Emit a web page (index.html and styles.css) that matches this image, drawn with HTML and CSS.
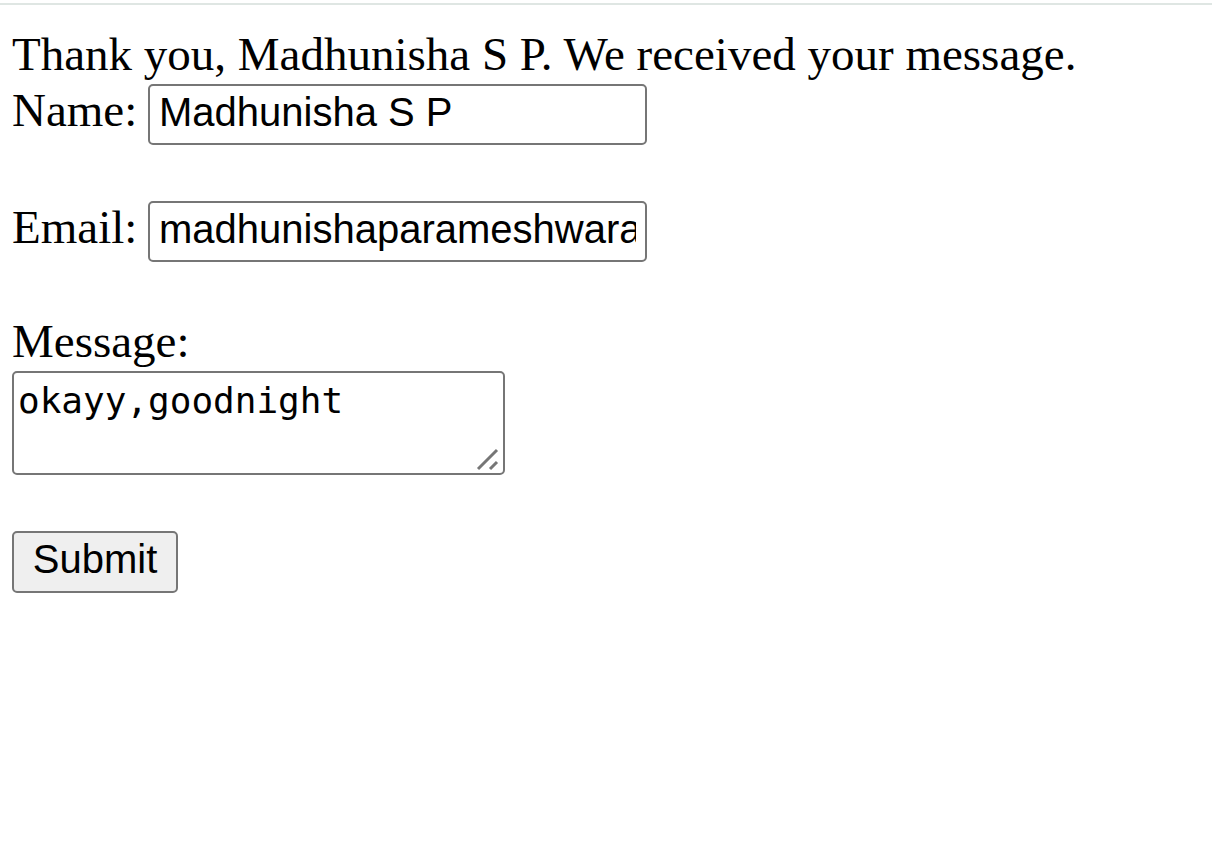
FILE: index.html
```html
<!DOCTYPE html>
<html lang="en">
<head>
<meta charset="utf-8">
<title>Contact</title>
<link rel="stylesheet" href="styles.css">
</head>
<body>
<div class="topline"></div>
<main class="page">
  <p class="thanks">Thank you, Madhunisha S P. We received your message.</p>
  <form class="form">
    <div class="row row-name">
      <label class="label" for="name">Name:</label>
      <input class="field" id="name" type="text" value="Madhunisha S P">
    </div>
    <div class="row row-email">
      <label class="label" for="email">Email:</label>
      <input class="field" id="email" type="text" value="madhunishaparameshwaran@gmail.com">
    </div>
    <div class="msg-label">
      <label class="label" for="message">Message:</label>
    </div>
    <div class="area-wrap">
      <textarea class="area" id="message">okayy,goodnight</textarea>
      <svg class="grip" width="24" height="24" viewBox="0 0 24 24" aria-hidden="true">
        <line x1="2" y1="22" x2="21" y2="3" stroke="#767676" stroke-width="3"/>
        <line x1="14" y1="22" x2="21" y2="15" stroke="#767676" stroke-width="3"/>
      </svg>
    </div>
    <div class="submit-row">
      <button class="btn" type="button">Submit</button>
    </div>
  </form>
</main>
</body>
</html>
```
FILE: styles.css
```css
html, body {
  margin: 0;
  padding: 0;
  background: #ffffff;
}

body {
  font-family: "Liberation Serif", "Times New Roman", serif;
  font-size: 47px;
  line-height: 55px;
  color: #000000;
}

.topline {
  margin-top: 3px;
  height: 2px;
  background: #dfe6e3;
}

.page {
  padding: 0 12px;
}

.thanks {
  margin: 22px 0 0 0;
  white-space: nowrap;
}

.form {
  margin: 0;
}

.row {
  display: flex;
  align-items: flex-start;
  gap: 10px;
}

.row .label {
  margin-top: -1px;
}

.row-name {
  margin-top: 2px;
}

.row-email {
  margin-top: 56px;
}

.label {
  display: block;
  width: 126px;
  white-space: nowrap;
}

.field {
  box-sizing: border-box;
  width: 499px;
  height: 61px;
  margin: 0;
  padding: 0 9px 5px 9px;
  border: 2px solid #767676;
  border-radius: 5px;
  background: #ffffff;
  font-family: "Liberation Sans", Arial, sans-serif;
  font-size: 40px;
  color: #000000;
  outline: none;
}

.msg-label {
  margin-top: 52px;
}

.area-wrap {
  position: relative;
  width: 493px;
  height: 104px;
  margin-top: 2px;
}

.area {
  display: block;
  box-sizing: border-box;
  width: 493px;
  height: 104px;
  margin: 0;
  padding: 7px 4px;
  border: 2px solid #767676;
  border-radius: 5px;
  font-family: "DejaVu Sans Mono", "Liberation Mono", monospace;
  font-size: 36px;
  color: #000000;
  background: #ffffff;
  resize: none;
  overflow: hidden;
  outline: none;
}

.grip {
  position: absolute;
  right: 5px;
  bottom: 4px;
}

.submit-row {
  margin-top: 55px;
}

.btn {
  box-sizing: border-box;
  width: 166px;
  height: 62px;
  margin: 0;
  padding: 0 0 5px 0;
  border: 2px solid #767676;
  border-radius: 5px;
  background: #efefef;
  font-family: "Liberation Sans", Arial, sans-serif;
  font-size: 40px;
  color: #000000;
}
```
